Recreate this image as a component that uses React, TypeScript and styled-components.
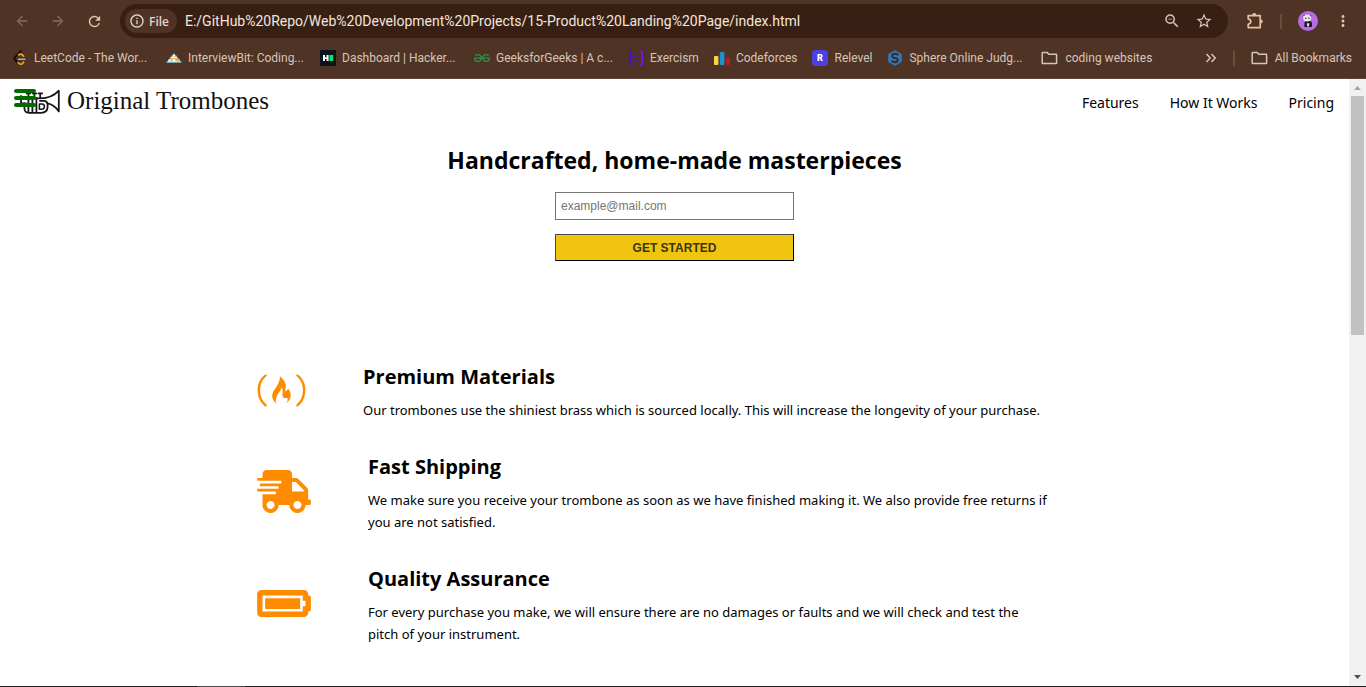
import React from 'react';
import styled, { createGlobalStyle } from 'styled-components';
import { MdArrowBack, MdArrowForward, MdRefresh, MdInfoOutline, MdZoomOut, MdStarOutline, MdMoreVert } from 'react-icons/md';
import { FaFreeCodeCamp, FaShippingFast, FaBatteryFull } from 'react-icons/fa';
import { SiGeeksforgeeks } from 'react-icons/si';

const c = {
  frame: '#4f3425',
  omnibox: '#371f13',
  chromeText: '#e6d5cb',
  bookmarkText: '#d6c4b9',
  dim: '#856c5f',
  accent: '#e8bfa6',
  divider: '#6b4d3c',
};

const GlobalStyle = createGlobalStyle`
  *, *::before, *::after { box-sizing: border-box; }
  body { margin: 0; background: #fff; color: #000; font-family: "Open Sans", sans-serif; }
  svg { display: block; flex: none; }
`;

const Window = styled.div`
  display: flex;
  flex-direction: column;
  min-height: 100vh;
`;

/* ---------- browser frame ---------- */
const BrowserFrame = styled.header`
  background: ${c.frame};
  border-bottom: 1px solid #5b4437;
  font-family: Roboto, sans-serif;
`;

const Toolbar = styled.div`
  display: flex;
  align-items: center;
  height: 42px;
  padding: 0 14px;
`;

const IconButton = styled.button<{ $color?: string }>`
  display: flex;
  padding: 0;
  border: 0;
  background: none;
  color: ${(p) => p.$color || c.accent};
`;

const NavButtons = styled.div`
  display: flex;
  align-items: center;
  gap: 20px;
  margin-right: 17px;
`;

const Omnibox = styled.div`
  display: flex;
  flex: 1;
  align-items: center;
  min-width: 0;
  height: 34px;
  padding: 0 15px 0 5px;
  border-radius: 17px;
  background: ${c.omnibox};
`;

const SchemeChip = styled.span`
  display: flex;
  align-items: center;
  gap: 4px;
  height: 24px;
  padding: 0 8px 0 4px;
  border-radius: 12px;
  background: ${c.frame};
  color: ${c.chromeText};
  font: 600 12px "Open Sans", sans-serif;
`;

const AddressInput = styled.input`
  flex: 1;
  min-width: 0;
  padding: 0 8px;
  border: 0;
  outline: 0;
  background: none;
  color: #f3e6de;
  font: 14px Roboto, sans-serif;
`;

const OmniboxActions = styled.div`
  display: flex;
  gap: 14px;
`;

const ToolbarActions = styled.div`
  display: flex;
  align-items: center;
  gap: 16px;
  margin-left: 18px;
`;

const Divider = styled.span`
  width: 2px;
  height: 15px;
  background: ${c.divider};
`;

const BookmarksBar = styled.nav`
  display: flex;
  align-items: center;
  gap: 15px;
  height: 36px;
  padding: 0 14px 4px 12px;
`;

const Bookmark = styled.a`
  display: flex;
  align-items: center;
  gap: 6px;
  color: ${c.bookmarkText};
  font-size: 12px;
  line-height: 16px;
  text-decoration: none;
  white-space: nowrap;
`;

const BookmarkLabel = styled.span<{ $clipped?: boolean }>`
  width: ${(p) => (p.$clipped ? '117px' : 'auto')};
`;

const BookmarksEnd = styled.div`
  display: flex;
  align-items: center;
  gap: 16px;
  margin-left: auto;
`;

/* ---------- page ---------- */
const Viewport = styled.div`
  display: flex;
  flex: 1;
`;

const Page = styled.main`
  flex: 1;
  min-width: 0;
`;

const SiteHeader = styled.header`
  display: flex;
  align-items: center;
  justify-content: space-between;
  height: 48px;
  padding: 0 15px 0 14px;
`;

const BrandBar = styled.div`
  position: relative;
`;

const Brand = styled.a`
  display: flex;
  align-items: center;
  gap: 7px;
  padding-bottom: 4px;
  color: #111;
  font: 25px/30px "Liberation Serif", serif;
  text-decoration: none;
`;

const MenuButton = styled.button`
  position: absolute;
  top: 3px;
  left: 0;
  display: flex;
  flex-direction: column;
  gap: 3px;
  padding: 0;
  border: 0;
  background: none;
`;

const MenuBar = styled.span`
  width: 22px;
  height: 4px;
  border-radius: 2px;
  background: #006c00;
`;

const SiteNav = styled.nav`
  display: flex;
  gap: 31px;
`;

const SiteLink = styled.a`
  color: #000;
  font: 14px/24px "Noto Sans", sans-serif;
  text-decoration: none;
`;

const Hero = styled.section`
  display: flex;
  flex-direction: column;
  align-items: center;
  padding: 17px 16px 102px;
`;

const HeroTitle = styled.h1`
  margin: 0 0 16px;
  font-size: 23px;
  line-height: 32px;
`;

const SignUp = styled.form`
  display: flex;
  flex-direction: column;
  gap: 14px;
  width: 239px;
`;

const EmailInput = styled.input`
  height: 28px;
  padding: 0 5px;
  border: 1px solid #767676;
  font: 12px "Liberation Sans", sans-serif;
  &::placeholder { color: #757575; }
`;

const SubmitButton = styled.button`
  height: 27px;
  padding: 0;
  border: 1px solid;
  border-color: #4a4a4a #000 #000 #4a4a4a;
  background: #f1c40f;
  color: #383418;
  font: bold 12px "Liberation Sans", sans-serif;
`;

const FeatureList = styled.section`
  display: flex;
  flex-direction: column;
  gap: 32px;
  width: 100%;
  max-width: 835px;
  margin: 0 auto;
  padding-bottom: 40px;
`;

const Feature = styled.article`
  display: flex;
  align-items: center;
  gap: 57px;
`;

const FeatureIcon = styled.span<{ $width: number }>`
  flex: none;
  padding-bottom: 4px;
  color: #ff8c00;
  svg { width: ${(p) => p.$width}px; height: 43px; }
`;

const FeatureTitle = styled.h2`
  margin: 0 0 8px;
  font-size: 20px;
  line-height: 28px;
`;

const FeatureText = styled.p`
  max-width: 681px;
  margin: 0;
  font: 13px/22px "Noto Sans", sans-serif;
`;

const Scrollbar = styled.div`
  display: flex;
  flex-direction: column;
  align-items: center;
  width: 17px;
  background: #f1f1f1;
`;

const ScrollArrow = styled.svg<{ $active?: boolean }>`
  fill: ${(p) => (p.$active ? '#505050' : '#a3a3a3')};
`;

const ScrollTrack = styled.div`
  flex: 1;
  width: 13px;
`;

const ScrollThumb = styled.div`
  height: 239px;
  background: #c1c1c1;
`;

const TaskbarEdge = styled.footer`
  height: 1px;
  padding-left: 197px;
  background: #1d1d1d;
`;

const TaskbarItem = styled.div`
  width: 48px;
  height: 1px;
  background: #4c4c4c;
`;

/* ---------- drawings ---------- */
const LeetCodeIcon = () => (
  <svg width="16" height="16" viewBox="0 0 16 16" fill="none" strokeWidth="1.7" strokeLinecap="round" strokeLinejoin="round">
    <path d="M9 1 L2.8 7.4 Q2 8.6 2.8 9.8 L7 14.2 Q8.2 15.2 9.4 14.4" stroke="#0d0a08" />
    <path d="M6.6 4.8 Q8.6 3.4 10.4 5 L11.6 6.2 M6 12.6 L7.4 13.8 Q8.8 14.8 10.2 13.6 L11.6 12.2" stroke="#f5a11b" />
    <path d="M6.6 9.3 H12.8" stroke="#b3b1b0" strokeWidth="1.4" />
  </svg>
);
const InterviewBitIcon = () => (
  <svg width="16" height="16" viewBox="0 0 16 16">
    <path d="M8 3.6 L15.6 12.6 H0.4Z" fill="#fff" />
    <path d="M4.4 8 H11.6 L14 11.4 H10.4 L8 8.6 L5.6 11.4 H4.6Z" fill="#f0b455" />
    <path d="M6.4 6 H9.6 L10.4 7.2 H5.6Z" fill="#f7d9a0" />
    <path d="M0.6 12.2 L7.6 4 M15.4 12.2 L8.4 4 M1 12.2 H15" stroke="#2fb9c6" strokeWidth="1.2" strokeDasharray="1.4 1.2" />
  </svg>
);
const HackerRankIcon = () => (
  <svg width="16" height="16" viewBox="0 0 16 16">
    <path d="M0 0H16V16H0Z" fill="#0e141e" />
    <path d="M3 5H5V7.2H6.6V5H8.6V11H6.6V9H5V11H3Z" fill="#fff" />
    <path d="M9.4 5H13.2V11H9.4Z" fill="#05e860" />
  </svg>
);
const ExercismIcon = () => (
  <svg width="16" height="16" viewBox="0 0 16 16" fill="none" strokeWidth="1.7">
    <path d="M4 1.2 Q2 1.2 2 3 V6 Q2 8 0.6 8 Q2 8 2 10 V13 Q2 14.8 4 14.8" stroke="#4a08f0" />
    <path d="M12 1.2 Q14 1.2 14 3 V6 Q14 8 15.4 8 Q14 8 14 10 V13 Q14 14.8 12 14.8" stroke="#7d10f0" />
    <path d="M4.4 7 Q5.4 5.4 6.6 7 M9.4 7 Q10.6 5.4 11.6 7 M6 9.6 Q8 11.8 10 9.6" stroke="#5a10c8" strokeWidth="1.1" />
  </svg>
);
const CodeforcesIcon = () => (
  <svg width="16" height="16" viewBox="0 0 16 16">
    <rect x="0" y="6" width="4.4" height="9" rx="1" fill="#fdd24a" />
    <rect x="5.8" y="2" width="4.6" height="13" rx="1" fill="#1f90cf" />
    <rect x="11.8" y="7.4" width="4.2" height="7.6" rx="1" fill="#b71d25" />
  </svg>
);
const RelevelIcon = () => (
  <svg width="16" height="16" viewBox="0 0 16 16">
    <rect width="16" height="16" rx="3.4" fill="#4b40e0" />
    <text x="8" y="11.4" textAnchor="middle" fontFamily="Roboto, sans-serif" fontWeight="900" fontSize="9" fill="#fff">R</text>
  </svg>
);
const SphereIcon = () => (
  <svg width="16" height="16" viewBox="0 0 16 16">
    <path d="M8 0.3 L14.8 4 V12 L8 15.7 L1.2 12 V4Z" fill="#3079bd" />
    <path d="M11 5.4 Q10.6 3.8 8 3.8 Q5.2 3.8 5.2 5.9 Q5.2 7.5 8 8 Q10.8 8.5 10.8 10.2 Q10.8 12.2 8 12.2 Q5.2 12.2 5 10.4" fill="none" stroke="#3a2c27" strokeWidth="2" />
  </svg>
);
const FolderIcon = () => (
  <svg width="18" height="16" viewBox="0 0 18 16" fill="none" stroke={c.bookmarkText} strokeWidth="1.5" strokeLinejoin="round">
    <path d="M1.2 3 Q1.2 2.4 1.8 2.4 H6 L7.8 4.2 H15 Q15.6 4.2 15.6 4.8 V13 Q15.6 13.6 15 13.6 H1.8 Q1.2 13.6 1.2 13Z" />
  </svg>
);
const MoreBookmarksIcon = () => (
  <svg width="12" height="12" viewBox="0 0 12 12" fill="none" stroke={c.bookmarkText} strokeWidth="1.5">
    <path d="M1.5 2 L5.2 6 L1.5 10 M6.5 2 L10.2 6 L6.5 10" />
  </svg>
);
const ExtensionIcon = () => (
  <svg width="18" height="18" viewBox="0 0 18 18">
    <path d="M2.2 3.6 H14.2 V15.6 H2.2 V12.4 Q4.8 11.8 4.8 9.6 Q4.8 7.4 2.2 6.8Z" fill="none" stroke={c.accent} strokeWidth="1.7" strokeLinejoin="round" />
    <path d="M6.2 3.2 A2 2.2 0 0 1 10.2 3.2Z M14.6 7.6 A2.2 2 0 0 1 14.6 11.6Z" fill={c.accent} />
  </svg>
);
const AvatarIcon = () => (
  <svg width="20" height="20" viewBox="0 0 20 20">
    <circle cx="10" cy="10" r="10" fill="#b66de4" />
    <path d="M6.4 12 Q7 9.6 10 9.8 Q13.4 9.6 14 12.4 L13.8 16 H11.2 L10.4 14.4 L9 16 H6.6Z" fill="#171217" />
    <ellipse cx="9.2" cy="7" rx="4" ry="3.4" fill="#ece8ee" />
    <path d="M8.6 12.2 H11.6 L11 15 H9Z" fill="#d8cfe0" />
    <path d="M5 4.2 L6.4 3.4 L6.8 5Z M11.8 3.8 L13.4 4.2 L13 5.8Z M7 6.8 H8.4 V8 H7Z M10.2 6.6 H11.6 V7.8 H10.2Z" fill="#3a3040" />
  </svg>
);
const TrumpetIcon = () => (
  <svg width="46" height="30" viewBox="0 0 46 30" fill="none" stroke="#161616" strokeWidth="1.8" strokeLinejoin="round" strokeLinecap="round">
    <path d="M7 12.4 H26 Q38 12.2 44.8 4.6 V25.4 Q40 18.4 33.4 17.4" />
    <path d="M7 10 V19.6 M7 17.4 H12" />
    <path d="M10.4 17.4 V22 Q10.4 26.8 15 26.8 H27 Q33.6 26.8 33.6 20.8 V18.6 Q33.6 14.8 29.6 14.8 H26" />
    <path d="M25.4 18 H28.2 Q30.4 18 30.4 20.4 Q30.4 23.2 27.6 23.2 H25.4Z" strokeWidth="1.5" />
    <path d="M14.4 12 V26 M18.4 12 V26 M22.4 12 V26" />
    <path d="M12.6 7.4 H16.2 M18.6 7.4 H22.2 M24.4 7.4 H28.2 M14.4 7.4 V12 M20.4 7.4 V12 M26.2 7.4 V12" />
  </svg>
);

const bookmarks = [
  { label: 'LeetCode - The Wor...', icon: <LeetCodeIcon />, clipped: true },
  { label: 'InterviewBit: Coding...', icon: <InterviewBitIcon />, clipped: true },
  { label: 'Dashboard | Hacker...', icon: <HackerRankIcon />, clipped: true },
  { label: 'GeeksforGeeks | A c...', icon: <SiGeeksforgeeks size={16} color="#2f8d46" />, clipped: true },
  { label: 'Exercism', icon: <ExercismIcon /> },
  { label: 'Codeforces', icon: <CodeforcesIcon /> },
  { label: 'Relevel', icon: <RelevelIcon /> },
  { label: 'Sphere Online Judg...', icon: <SphereIcon />, clipped: true },
  { label: 'coding websites', icon: <FolderIcon /> },
];

const features = [
  {
    icon: <FaFreeCodeCamp />,
    iconWidth: 49,
    title: 'Premium Materials',
    text: 'Our trombones use the shiniest brass which is sourced locally. This will increase the longevity of your purchase.',
  },
  {
    icon: <FaShippingFast />,
    iconWidth: 54,
    title: 'Fast Shipping',
    text: 'We make sure you receive your trombone as soon as we have finished making it. We also provide free returns if you are not satisfied.',
  },
  {
    icon: <FaBatteryFull />,
    iconWidth: 54,
    title: 'Quality Assurance',
    text: 'For every purchase you make, we will ensure there are no damages or faults and we will check and test the pitch of your instrument.',
  },
];

export default function App() {
  return (
    <Window>
      <GlobalStyle />
      <BrowserFrame>
        <Toolbar>
          <NavButtons>
            <IconButton $color={c.dim} aria-label="Back"><MdArrowBack size={16} /></IconButton>
            <IconButton $color={c.dim} aria-label="Forward"><MdArrowForward size={16} /></IconButton>
            <IconButton aria-label="Reload"><MdRefresh size={17} /></IconButton>
          </NavButtons>
          <Omnibox>
            <SchemeChip><MdInfoOutline size={16} />File</SchemeChip>
            <AddressInput
              aria-label="Address"
              defaultValue="E:/GitHub%20Repo/Web%20Development%20Projects/15-Product%20Landing%20Page/index.html"
            />
            <OmniboxActions>
              <IconButton $color={c.bookmarkText} aria-label="Zoom"><MdZoomOut size={18} /></IconButton>
              <IconButton $color={c.bookmarkText} aria-label="Bookmark this page"><MdStarOutline size={18} /></IconButton>
            </OmniboxActions>
          </Omnibox>
          <ToolbarActions>
            <IconButton aria-label="Extensions"><ExtensionIcon /></IconButton>
            <Divider />
            <IconButton aria-label="Profile"><AvatarIcon /></IconButton>
            <IconButton aria-label="More"><MdMoreVert size={18} /></IconButton>
          </ToolbarActions>
        </Toolbar>
        <BookmarksBar aria-label="Bookmarks">
          {bookmarks.map((b) => (
            <Bookmark href="#" key={b.label}>
              {b.icon}
              <BookmarkLabel $clipped={b.clipped}>{b.label}</BookmarkLabel>
            </Bookmark>
          ))}
          <BookmarksEnd>
            <IconButton aria-label="More bookmarks"><MoreBookmarksIcon /></IconButton>
            <Divider />
            <Bookmark href="#"><FolderIcon />All Bookmarks</Bookmark>
          </BookmarksEnd>
        </BookmarksBar>
      </BrowserFrame>

      <Viewport>
        <Page>
          <SiteHeader>
            <BrandBar>
              <Brand href="#">
                <TrumpetIcon />
                Original Trombones
              </Brand>
              <MenuButton aria-label="Menu">
                <MenuBar />
                <MenuBar />
                <MenuBar />
              </MenuButton>
            </BrandBar>
            <SiteNav>
              <SiteLink href="#features">Features</SiteLink>
              <SiteLink href="#how-it-works">How It Works</SiteLink>
              <SiteLink href="#pricing">Pricing</SiteLink>
            </SiteNav>
          </SiteHeader>
          <Hero>
            <HeroTitle>Handcrafted, home-made masterpieces</HeroTitle>
            <SignUp>
              <EmailInput type="email" aria-label="Email" placeholder="example@mail.com" />
              <SubmitButton type="button">GET STARTED</SubmitButton>
            </SignUp>
          </Hero>
          <FeatureList id="features">
            {features.map((f) => (
              <Feature key={f.title}>
                <FeatureIcon $width={f.iconWidth}>{f.icon}</FeatureIcon>
                <div>
                  <FeatureTitle>{f.title}</FeatureTitle>
                  <FeatureText>{f.text}</FeatureText>
                </div>
              </Feature>
            ))}
          </FeatureList>
        </Page>
        <Scrollbar>
          <ScrollArrow width="17" height="17" viewBox="0 0 17 17"><path d="M5 11 L8.5 7 L12 11Z" /></ScrollArrow>
          <ScrollTrack><ScrollThumb /></ScrollTrack>
          <ScrollArrow $active width="17" height="17" viewBox="0 0 17 17"><path d="M5 6 H12 L8.5 10Z" /></ScrollArrow>
        </Scrollbar>
      </Viewport>
      <TaskbarEdge><TaskbarItem /></TaskbarEdge>
    </Window>
  );
}
